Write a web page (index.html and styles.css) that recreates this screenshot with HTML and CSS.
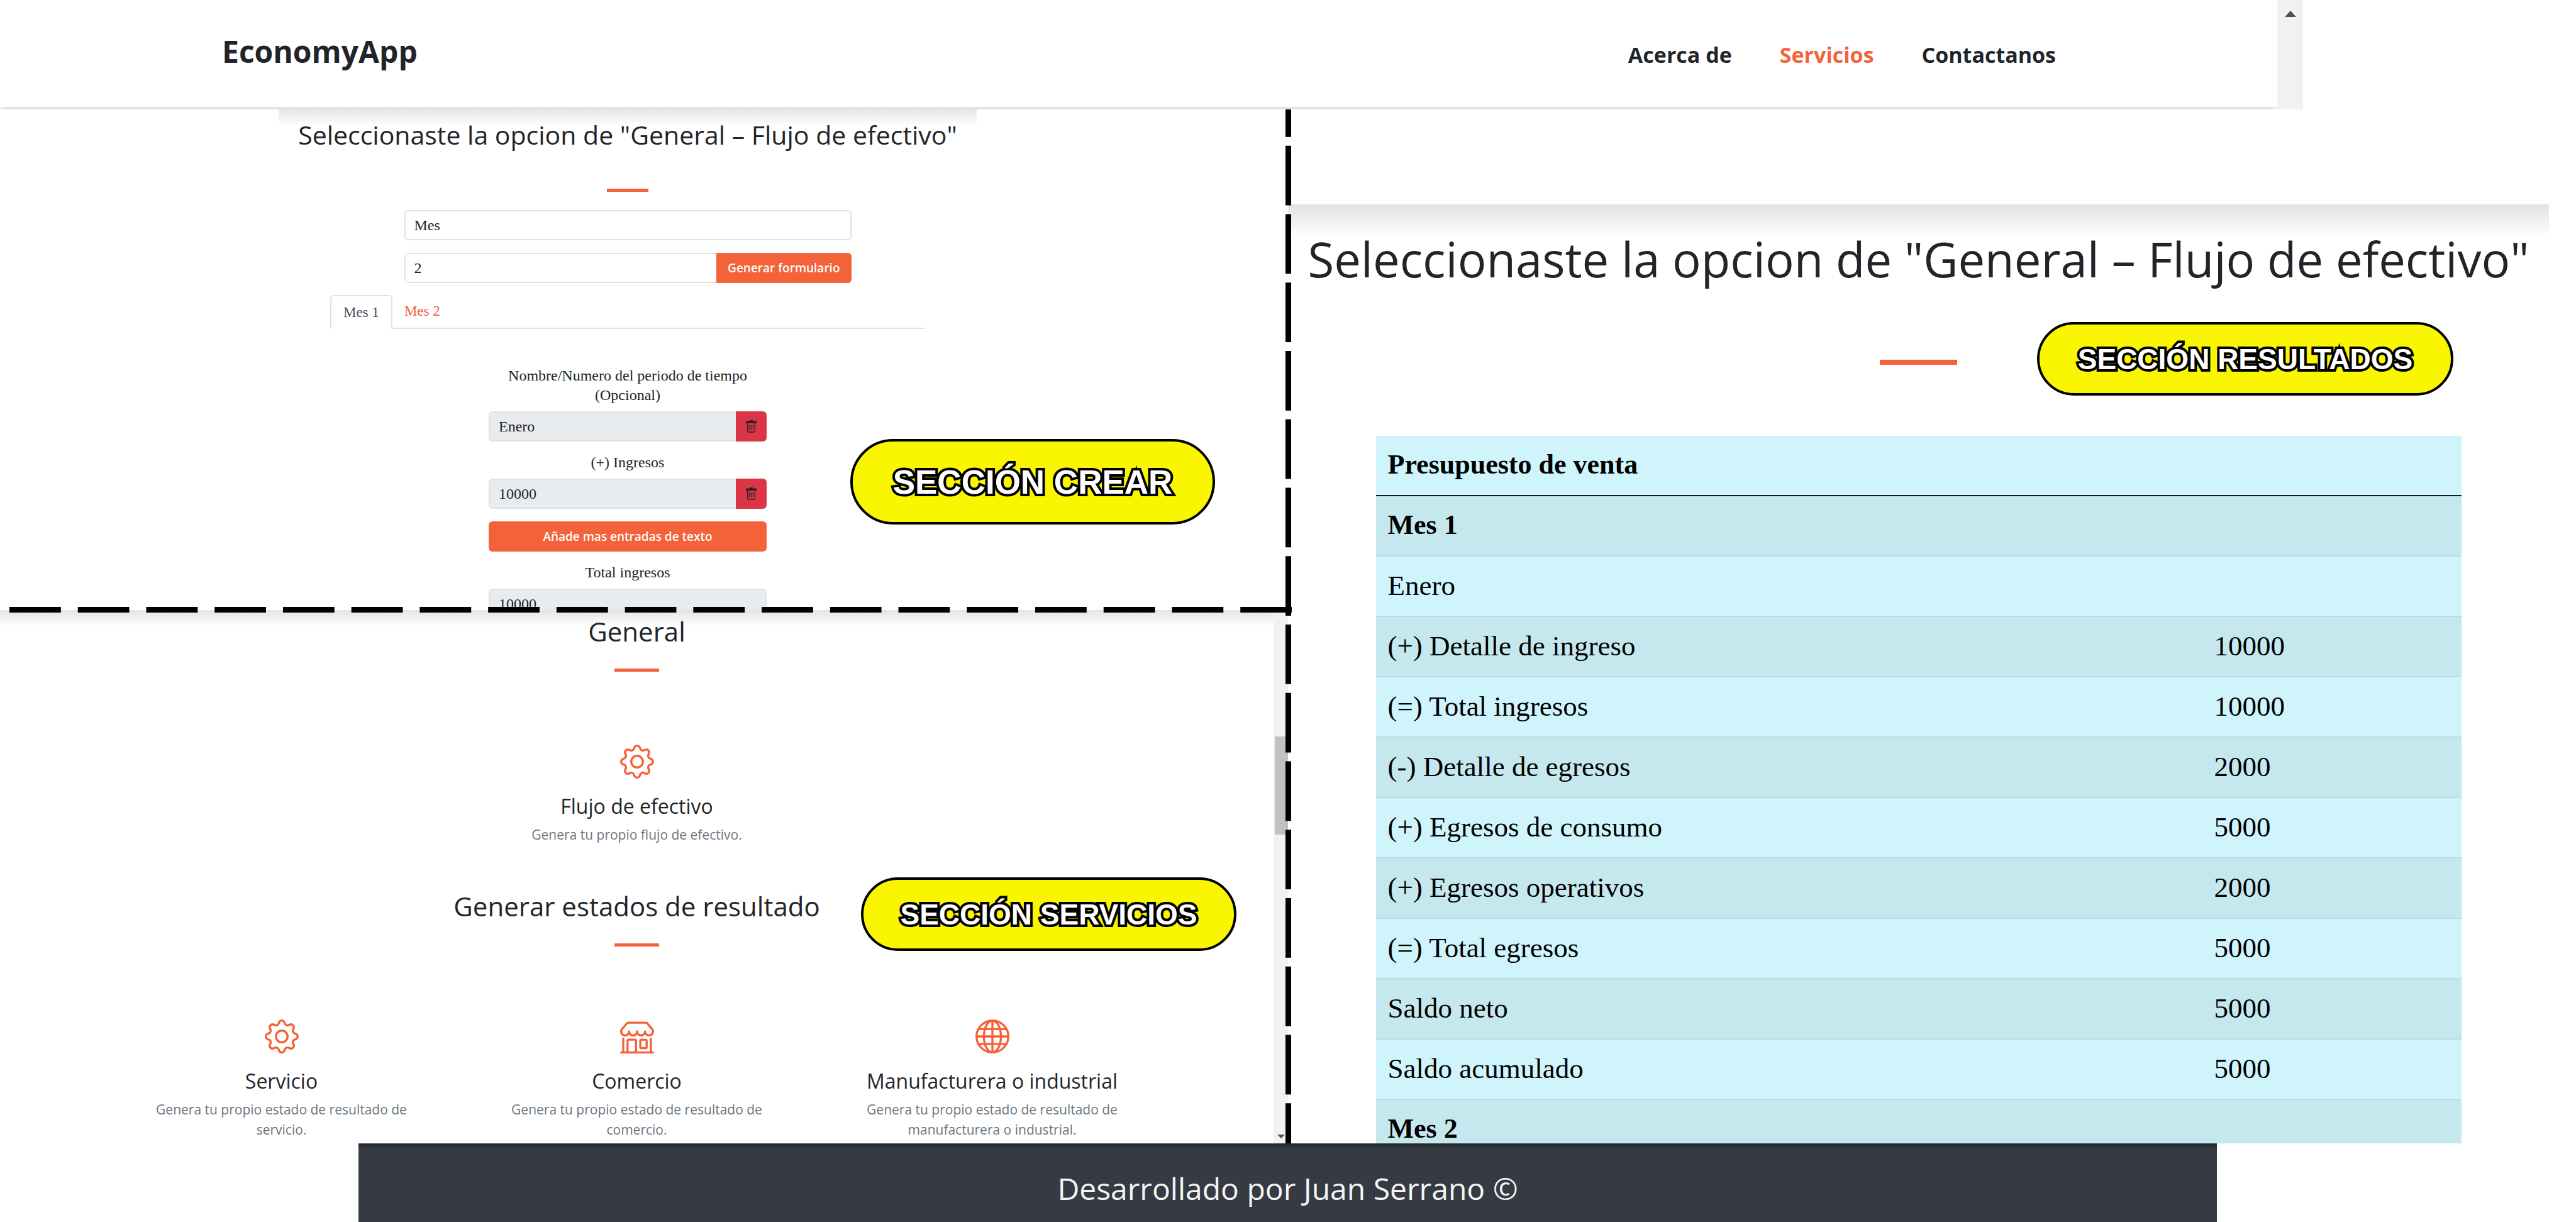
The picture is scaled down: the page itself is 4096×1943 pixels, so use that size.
FILE: index.html
```html
<!DOCTYPE html>
<html lang="es">
<head>
<meta charset="utf-8">
<meta name="viewport" content="width=device-width, initial-scale=1">
<title>EconomyApp</title>
<link rel="stylesheet" href="styles.css">
</head>
<body>
<svg class="sprite" aria-hidden="true">
  <symbol id="gear" viewBox="0 0 16 16">
    <path d="M8 4.754a3.246 3.246 0 1 0 0 6.492 3.246 3.246 0 0 0 0-6.492zM5.754 8a2.246 2.246 0 1 1 4.492 0 2.246 2.246 0 0 1-4.492 0z"/>
    <path d="M9.796 1.343c-.527-1.79-3.065-1.79-3.592 0l-.094.319a.873.873 0 0 1-1.255.52l-.292-.16c-1.64-.892-3.433.902-2.54 2.541l.159.292a.873.873 0 0 1-.52 1.255l-.319.094c-1.79.527-1.79 3.065 0 3.592l.319.094a.873.873 0 0 1 .52 1.255l-.16.292c-.892 1.64.901 3.434 2.541 2.54l.292-.159a.873.873 0 0 1 1.255.52l.094.319c.527 1.79 3.065 1.79 3.592 0l.094-.319a.873.873 0 0 1 1.255-.52l.292.16c1.64.893 3.434-.902 2.54-2.541l-.159-.292a.873.873 0 0 1 .52-1.255l.319-.094c1.79-.527 1.79-3.065 0-3.592l-.319-.094a.873.873 0 0 1-.52-1.255l.16-.292c.893-1.64-.902-3.433-2.541-2.54l-.292.159a.873.873 0 0 1-1.255-.52l-.094-.319zm-2.633.283c.246-.835 1.428-.835 1.674 0l.094.319a1.873 1.873 0 0 0 2.693 1.115l.291-.16c.764-.415 1.6.42 1.184 1.185l-.159.292a1.873 1.873 0 0 0 1.116 2.692l.318.094c.835.246.835 1.428 0 1.674l-.319.094a1.873 1.873 0 0 0-1.115 2.693l.16.291c.415.764-.42 1.6-1.185 1.184l-.291-.159a1.873 1.873 0 0 0-2.693 1.116l-.094.318c-.246.835-1.428.835-1.674 0l-.094-.319a1.873 1.873 0 0 0-2.692-1.115l-.292.16c-.764.415-1.6-.42-1.184-1.185l.159-.291A1.873 1.873 0 0 0 1.945 8.93l-.319-.094c-.835-.246-.835-1.428 0-1.674l.319-.094A1.873 1.873 0 0 0 3.06 4.377l-.16-.292c-.415-.764.42-1.6 1.185-1.184l.292.159a1.873 1.873 0 0 0 2.692-1.115l.094-.319z"/>
  </symbol>
  <symbol id="shop" viewBox="0 0 16 16">
    <path d="M2.97 1.35A1 1 0 0 1 3.73 1h8.54a1 1 0 0 1 .76.35l2.609 3.044A1.5 1.5 0 0 1 16 5.37v.255a2.375 2.375 0 0 1-4.25 1.458A2.371 2.371 0 0 1 9.875 8 2.37 2.37 0 0 1 8 7.083 2.37 2.37 0 0 1 6.125 8a2.37 2.37 0 0 1-1.875-.917A2.375 2.375 0 0 1 0 5.625V5.37a1.5 1.5 0 0 1 .361-.976l2.61-3.045zm1.78 4.275a1.375 1.375 0 0 0 2.75 0 .5.5 0 0 1 1 0 1.375 1.375 0 0 0 2.75 0 .5.5 0 0 1 1 0 1.375 1.375 0 1 0 2.75 0V5.37a.5.5 0 0 0-.12-.325L12.27 2H3.73L1.12 5.045A.5.5 0 0 0 1 5.37v.255a1.375 1.375 0 0 0 2.75 0 .5.5 0 0 1 1 0zM1.5 8.5A.5.5 0 0 1 2 9v6h1v-5a1 1 0 0 1 1-1h3a1 1 0 0 1 1 1v5h6V9a.5.5 0 0 1 1 0v6h.5a.5.5 0 0 1 0 1H.5a.5.5 0 0 1 0-1H1V9a.5.5 0 0 1 .5-.5zM4 15h3v-5H4v5zm5-5a1 1 0 0 1 1-1h2a1 1 0 0 1 1 1v3a1 1 0 0 1-1 1h-2a1 1 0 0 1-1-1v-3zm3 0h-2v3h2v-3z"/>
  </symbol>
  <symbol id="globe" viewBox="0 0 16 16">
    <g fill="none" stroke="currentColor">
      <circle cx="8" cy="8" r="7.5"/>
      <ellipse cx="8" cy="8" rx="4" ry="7.5"/>
      <path d="M8 .5v15M.5 8h15M1.3 4.5h13.4M1.3 11.5h13.4"/>
    </g>
  </symbol>
  <symbol id="trash" viewBox="0 0 17 20">
    <path d="M6 0h5v2H6zM1 1.5h15a1 1 0 0 1 1 1V5H0V2.500a1 1 0 0 1 1-1z"/>
    <path d="M2.500 5v11.500a2.500 2.500 0 0 0 2.500 2.500h7a2.500 2.500 0 0 0 2.500-2.500V5M5.500 7.500v8M8.500 7.500v8M11.500 7.500v8" fill="none" stroke="currentColor" stroke-width="1.300"/>
  </symbol>
</svg>

<div class="page">
  <header class="site-header">
    <div class="navbar">
      <a class="brand" href="#">EconomyApp</a>
      <nav class="menu">
        <a href="#acerca">Acerca de</a>
        <a class="active" href="#servicios">Servicios</a>
        <a href="#contacto">Contactanos</a>
      </nav>
    </div>
    <div class="scrollbar scrollbar-top" aria-hidden="true"><span class="arrow-up"></span></div>
  </header>

  <main class="panels">
    <div class="left">
      <section class="create">
        <div class="create-head"><h2 class="title">Seleccionaste la opcion de "General – Flujo de efectivo"</h2></div>
        <hr class="rule">
        <form class="generator">
          <input class="field" type="text" value="Mes" aria-label="Periodo">
          <div class="group">
            <input class="field" type="text" value="2" aria-label="Cantidad">
            <button class="btn" type="button">Generar formulario</button>
          </div>
        </form>
        <nav class="tabs">
          <a class="tab current" href="#mes1">Mes 1</a>
          <a class="tab" href="#mes2">Mes 2</a>
        </nav>
        <form class="entries">
          <label for="periodo">Nombre/Numero del periodo de tiempo (Opcional)</label>
          <div class="group">
            <input class="field filled" id="periodo" type="text" value="Enero" readonly>
            <button class="btn danger" type="button" aria-label="Borrar periodo"><svg><use href="#trash"/></svg></button>
          </div>
          <label for="ingresos">(+) Ingresos</label>
          <div class="group">
            <input class="field filled" id="ingresos" type="text" value="10000" readonly>
            <button class="btn danger" type="button" aria-label="Borrar ingreso"><svg><use href="#trash"/></svg></button>
          </div>
          <button class="btn add" type="button">Añade mas entradas de texto</button>
          <label for="total">Total ingresos</label>
          <input class="field filled" id="total" type="text" value="10000" readonly>
        </form>
      </section>

      <section class="services">
        <div class="services-body">
          <h2 class="title">General</h2>
          <hr class="rule">
          <div class="cards">
            <article class="card middle">
              <svg class="icon"><use href="#gear"/></svg>
              <h3>Flujo de efectivo</h3>
              <p>Genera tu propio flujo de efectivo.</p>
            </article>
          </div>
          <h2 class="title second">Generar estados de resultado</h2>
          <hr class="rule">
          <div class="cards">
            <article class="card">
              <svg class="icon"><use href="#gear"/></svg>
              <h3>Servicio</h3>
              <p>Genera tu propio estado de resultado de servicio.</p>
            </article>
            <article class="card">
              <svg class="icon"><use href="#shop"/></svg>
              <h3>Comercio</h3>
              <p>Genera tu propio estado de resultado de comercio.</p>
            </article>
            <article class="card">
              <svg class="icon"><use href="#globe"/></svg>
              <h3>Manufacturera o industrial</h3>
              <p>Genera tu propio estado de resultado de manufacturera o industrial.</p>
            </article>
          </div>
        </div>
        <div class="scrollbar scrollbar-side" aria-hidden="true"><span class="thumb"></span><span class="arrow-down"></span></div>
      </section>
    </div>

    <section class="results">
      <h2 class="title big">Seleccionaste la opcion de "General – Flujo de efectivo"</h2>
      <hr class="rule">
      <table class="budget">
        <colgroup><col class="concept"><col></colgroup>
        <thead><tr><th colspan="2">Presupuesto de venta</th></tr></thead>
        <tbody>
          <tr><th colspan="2">Mes 1</th></tr>
          <tr><td colspan="2">Enero</td></tr>
          <tr><td>(+) Detalle de ingreso</td><td>10000</td></tr>
          <tr><td>(=) Total ingresos</td><td>10000</td></tr>
          <tr><td>(-) Detalle de egresos</td><td>2000</td></tr>
          <tr><td>(+) Egresos de consumo</td><td>5000</td></tr>
          <tr><td>(+) Egresos operativos</td><td>2000</td></tr>
          <tr><td>(=) Total egresos</td><td>5000</td></tr>
          <tr><td>Saldo neto</td><td>5000</td></tr>
          <tr><td>Saldo acumulado</td><td>5000</td></tr>
          <tr><th colspan="2">Mes 2</th></tr>
        </tbody>
      </table>
    </section>
  </main>

  <footer class="site-footer">Desarrollado por Juan Serrano ©</footer>

  <div class="divider horizontal"></div>
  <div class="divider vertical"></div>
  <div class="badge badge-create">SECCIÓN CREAR</div>
  <div class="badge badge-services">SECCIÓN SERVICIOS</div>
  <div class="badge badge-results">SECCIÓN RESULTADOS</div>
</div>
</body>
</html>
```
FILE: styles.css
```css
:root {
  --orange: #f4623a;
  --ink: #212529;
  --sans: "Open Sans", "Noto Sans", sans-serif;
  --serif: "Liberation Serif", serif;
}
* { box-sizing: border-box; }
body { margin: 0; background: #fff; color: var(--ink); font-family: var(--serif); }
h2, h3, p { margin: 0; font-weight: 400; }
a { text-decoration: none; }
.sprite { position: absolute; width: 0; height: 0; }

.page {
  position: relative;
  display: grid;
  grid-template-rows: 174px minmax(0, 1fr) 125px;
  height: 100vh;
  overflow: hidden;
}

/* Header */
.site-header {
  display: flex;
  position: relative;
  z-index: 2;
  margin-right: 434px;
  background: #fff;
  overflow: hidden;
}
.navbar {
  display: flex;
  flex: 1;
  justify-content: space-between;
  align-items: baseline;
  height: 170px;
  padding: 52px 352px 0 353px;
  box-shadow: 0 8px 16px rgba(0, 0, 0, .15);
  font-family: var(--sans);
}
.brand { font-size: 48px; line-height: 60px; font-weight: 700; color: var(--ink); }
.menu { display: flex; gap: 76px; font-size: 34px; font-weight: 700; }
.menu a { color: var(--ink); }
.menu .active { color: var(--orange); }

.scrollbar { display: flex; flex-direction: column; align-items: center; position: relative; background: #f1f1f1; }
.scrollbar-top { width: 41px; padding-top: 17px; }
.scrollbar-side { width: 23px; padding-top: 201px; padding-bottom: 8px; justify-content: space-between; }
.thumb { align-self: stretch; height: 156px; margin-left: 2px; background: #c1c1c1; }
.arrow-up { border: 9px solid transparent; border-top: 0; border-bottom: 10px solid #505050; }
.arrow-down { border: 6px solid transparent; border-bottom: 0; border-top: 6px solid #505050; }

/* Panels */
.panels { display: grid; grid-template-columns: 1fr 1fr; min-height: 0; }
.left { display: grid; grid-template-rows: minmax(0, 796fr) minmax(0, 848fr); min-height: 0; }
.title { font-family: var(--sans); font-size: 42px; line-height: 50px; font-weight: 500; text-align: center; }
.rule { width: 66px; height: 5px; margin: 61px auto 0; border: 0; background: var(--orange); }

.create {
  display: flex;
  flex-direction: column;
  align-items: center;
  padding-right: 52px;
  overflow: hidden;
}
.create-head {
  width: 1110px;
  flex: none;
  padding-top: 15px;
  background: linear-gradient(#e4e4e4, #fff) top / 100% 26px no-repeat;
}
.create .title { font-size: 41px; }
.create .rule { flex: none; }
.field {
  display: block;
  width: 100%;
  min-width: 0;
  height: 48px;
  padding: 0 14px;
  border: 2px solid #dee2e6;
  border-radius: 6px;
  background: #fff;
  color: var(--ink);
  font: 24px var(--serif);
}
.filled { background: #e9ecef; }
.group { display: flex; }
.group .field { flex: 1; border-right: 0; border-radius: 6px 0 0 6px; }
.btn {
  height: 48px;
  padding: 0 18px;
  border: 0;
  border-radius: 6px;
  background: var(--orange);
  color: #fff;
  font: 600 19px var(--sans);
  white-space: nowrap;
}
.group .btn { border-radius: 0 6px 6px 0; }
.group .danger { width: 49px; padding: 0; background: #dc3545; color: var(--ink); }
.danger svg { display: block; width: 17px; height: 20px; margin: auto; fill: currentColor; }
.generator { display: grid; flex: none; gap: 20px; width: 711px; margin-top: 29px; }
.tabs { display: flex; flex: none; width: 946px; height: 54px; margin-top: 19px; border-bottom: 2px solid #dee2e6; }
.tab { height: 54px; padding: 0 19px; color: var(--orange); font-size: 23px; line-height: 52px; }
.current { border: 2px solid #dee2e6; border-bottom: 0; border-radius: 6px 6px 0 0; background: #fff; color: #495057; }
.entries { display: flex; flex: none; flex-direction: column; width: 442px; margin-top: 59px; }
.entries label { margin: 18px 20px 10px; font-size: 24px; line-height: 31px; text-align: center; }
.entries label:first-child { margin-top: 0; }
.add { margin-top: 20px; }

.services { display: flex; overflow: hidden; }
.services-body {
  flex: 1;
  padding-top: 9px;
  background: linear-gradient(#e4e4e4, #fff) top / 100% 26px no-repeat;
}
.services .rule { width: 71px; margin-top: 34px; }
.cards { display: grid; grid-template-columns: repeat(3, 565px); justify-content: center; margin-top: 116px; }
.card { padding: 0 60px; text-align: center; font-family: var(--sans); }
.middle { grid-column: 2; }
.icon { display: block; width: 54px; height: 54px; margin: 0 auto; color: var(--orange); fill: currentColor; }
.card h3 { margin: 24px -40px 0; font-size: 32px; line-height: 40px; font-weight: 500; }
.card p { margin-top: 9px; font-size: 21px; line-height: 32px; font-weight: 500; color: #6c757d; }
.second { margin-top: 73px; }

/* Results */
.results {
  min-width: 0;
  margin: 151px 43px 0 0;
  padding-top: 39px;
  overflow: hidden;
  background: linear-gradient(#e2e2e2, #fff) top / 100% 52px no-repeat;
}
.big { font-size: 76px; line-height: 96px; white-space: nowrap; }
.results .rule { width: 123px; height: 8px; margin-top: 112px; }
.budget {
  width: 1726px;
  margin: 113px auto 0;
  border-collapse: separate;
  border-spacing: 0;
  table-layout: fixed;
  background: #cff4fc;
  color: #000;
  font-size: 45px;
  line-height: 50px;
}
.concept { width: 1314px; }
.budget th, .budget td { height: 96px; padding: 0 19px 2px; border-bottom: 2px solid #badce3; text-align: left; }
.budget th { font-size: 44px; }
.budget thead th { border-bottom-color: #16191b; }
.budget tbody tr:nth-child(odd) { background: #c5e8ef; }

/* Footer */
.site-footer {
  position: relative;
  z-index: 2;
  margin: 0 571px 0 570px;
  border-top: 5px solid #242c33;
  background: #363a42;
  color: #f4f4f4;
  font: 500 48px/134px var(--sans);
  text-align: center;
}

/* Overlays */
.divider { position: absolute; }
.horizontal {
  top: 965px;
  left: 15px;
  width: 2066px;
  height: 9px;
  background: linear-gradient(90deg, #000 82px, transparent 82px) 0 0 / calc(100% / 19) 100%;
  clip-path: inset(0 27px 0 0);
}
.vertical {
  top: 123px;
  left: 2044px;
  width: 9px;
  height: 1740px;
  background: linear-gradient(#000 95px, transparent 95px) 0 0 / 100% calc(100% / 16);
}
.badge {
  position: absolute;
  z-index: 3;
  display: flex;
  align-items: center;
  justify-content: center;
  height: 117px;
  border: 4px solid #000;
  border-radius: 68px;
  background: #faf500;
  color: #fff;
  font: 700 46px "Liberation Sans", sans-serif;
  white-space: nowrap;
  -webkit-text-stroke: 8px #000;
  paint-order: stroke fill;
}
.badge-create { top: 698px; left: 1352px; width: 580px; height: 136px; font-size: 53px; }
.badge-services { top: 1395px; left: 1369px; width: 597px; }
.badge-results { top: 512px; left: 3239px; width: 662px; }
```
